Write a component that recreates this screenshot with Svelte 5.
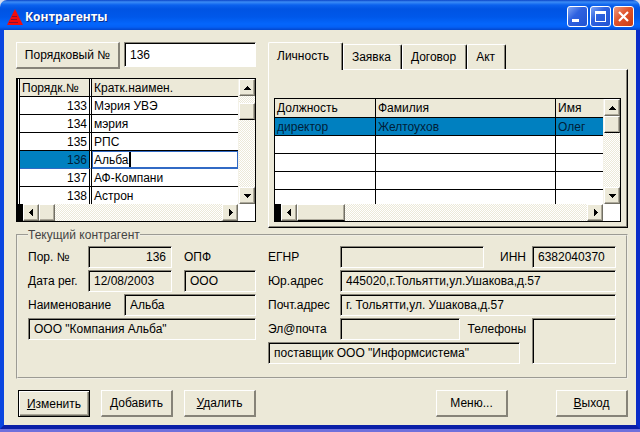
<script>
  const contractors = [
    { id: 133, name: 'Мэрия УВЭ' },
    { id: 134, name: 'мэрия' },
    { id: 135, name: 'РПС' },
    { id: 136, name: 'Альба' },
    { id: 137, name: 'АФ-Компани' },
    { id: 138, name: 'Астрон' }
  ]

  const people = [
    { post: 'директор', surname: 'Желтоухов', name: 'Олег' },
    { post: '', surname: '', name: '' },
    { post: '', surname: '', name: '' },
    { post: '', surname: '', name: '' },
    { post: '', surname: '', name: '' }
  ]

  const tabs = ['Личность', 'Заявка', 'Договор', 'Акт']

  let search = $state('136')
  let selectedId = $state(136)
  let activeTab = $state('Личность')
  let editName = $state('Альба')
</script>

{#snippet arrow(points, label)}
  <button class="scroll-button" type="button" aria-label={label}>
    <svg width="7" height="7" viewBox="0 0 7 7" shape-rendering="crispEdges">
      <polygon {points} />
    </svg>
  </button>
{/snippet}

{#snippet vscroll()}
  <div class="scroll scroll--v">
    {@render arrow('0,6 3.5,2 7,6', 'Вверх')}
    <div class="thumb"></div>
    <div class="track"></div>
    {@render arrow('0,2 7,2 3.5,6', 'Вниз')}
  </div>
{/snippet}

{#snippet hscroll(wide)}
  <div class="scroll scroll--h">
    <div class="split"></div>
    {@render arrow('5,0 5,7 1,3.5', 'Влево')}
    <div class="thumb" class:thumb--wide={wide}></div>
    <div class="track"></div>
    {@render arrow('2,0 6,3.5 2,7', 'Вправо')}
  </div>
{/snippet}

<main class="window">
  <header class="titlebar">
    <svg class="logo" width="16" height="18" viewBox="0 0 16 18">
      <path d="M8 1 L16 17 H0 Z" fill="#f40c0c" />
      <path d="M5 8.5h5M4 11.5h6M2 14.5h9" stroke="#8c1030" stroke-width="1" />
    </svg>
    <h1>Контрагенты</h1>
    <div class="caption-buttons">
      <button class="caption" type="button" aria-label="Свернуть">
        <svg width="19" height="19" viewBox="0 0 19 19"><path d="M4 12h7v3H4z" fill="#fff" /></svg>
      </button>
      <button class="caption" type="button" aria-label="Развернуть">
        <svg width="19" height="19" viewBox="0 0 19 19">
          <path d="M4 4h11v11H4zM5 7v7h9V7z" fill="#fff" fill-rule="evenodd" />
        </svg>
      </button>
      <button class="caption caption--close" type="button" aria-label="Закрыть">
        <svg width="19" height="19" viewBox="0 0 19 19">
          <path d="M5 5l9 9M14 5l-9 9" stroke="#fff" stroke-width="2.2" />
        </svg>
      </button>
    </div>
  </header>

  <div class="client">
    <div class="top">
      <section class="list">
        <div class="search">
          <button class="btn btn--search" type="button">Порядковый №</button>
          <input class="search-input" aria-label="Порядковый №" bind:value={search} />
        </div>

        <div class="grid">
          <table class="contractors">
            <thead>
              <tr><th class="num">Порядк.№</th><th>Кратк.наимен.</th></tr>
            </thead>
            <tbody>
              {#each contractors as row (row.id)}
                <tr class:current={row.id === selectedId} onclick={() => (selectedId = row.id)}>
                  <td class="num">{row.id}</td>
                  {#if row.id === 136}
                    <td class="edit">
                      <div class="edit-box">
                        <input class="cell-input" aria-label="Кратк.наимен." bind:value={editName} /><i class="caret"></i>
                      </div>
                    </td>
                  {:else}
                    <td>{row.name}</td>
                  {/if}
                </tr>
              {/each}
            </tbody>
          </table>
          {@render vscroll()}
          {@render hscroll(false)}
        </div>
      </section>

      <section class="tabs">
        <div class="tab-row" role="tablist">
          {#each tabs as tab}
            <button
              class="tab"
              class:tab--active={tab === activeTab}
              type="button"
              role="tab"
              aria-selected={tab === activeTab}
              onclick={() => (activeTab = tab)}>{tab}</button>
          {/each}
        </div>
        <div class="page" role="tabpanel">
          <div class="grid">
            <table class="people">
              <thead>
                <tr><th class="post">Должность</th><th>Фамилия</th><th class="first">Имя</th></tr>
              </thead>
              <tbody>
                {#each people as person, i}
                  <tr class:selected={i === 0}>
                    <td>{person.post}</td>
                    <td>{person.surname}</td>
                    <td>{person.name}</td>
                  </tr>
                {/each}
              </tbody>
            </table>
            {@render vscroll()}
            {@render hscroll(true)}
          </div>
        </div>
      </section>
    </div>

    <fieldset>
      <legend>Текущий контрагент</legend>
      <div class="details">
        <div class="main-fields">
          <label for="num">Пор. №</label>
          <input id="num" class="f-num right" value="136" readonly />
          <label for="opf" class="l-opf">ОПФ</label>
          <label for="date">Дата рег.</label>
          <input id="date" class="f-num" value="12/08/2003" readonly />
          <input id="opf" class="f-opf" value="ООО" readonly />
          <label for="name" class="l-name">Наименование</label>
          <input id="name" class="f-name" value="Альба" readonly />
          <input class="f-full" aria-label="Полное наименование" value={'ООО "Компания Альба"'} readonly />
        </div>
        <div class="more-fields">
          <label for="egnr">ЕГНР</label>
          <input id="egnr" class="f-egnr" readonly />
          <label for="inn" class="l-inn">ИНН</label>
          <input id="inn" class="f-inn" value="6382040370" readonly />
          <label for="legal">Юр.адрес</label>
          <input id="legal" class="f-address" value="445020,г.Тольятти,ул.Ушакова,д.57" readonly />
          <label for="post">Почт.адрес</label>
          <input id="post" class="f-address" value="г. Тольятти,ул. Ушакова,д.57" readonly />
          <label for="email">Эл@почта</label>
          <input id="email" class="f-email" readonly />
          <label for="phones" class="l-phones">Телефоны</label>
          <textarea id="phones" class="f-phones" readonly></textarea>
          <input class="f-note" aria-label="Примечание" value={'поставщик ООО "Информсистема"'} readonly />
        </div>
      </div>
    </fieldset>

    <div class="actions">
      <button class="btn btn--default" type="button"><u>И</u>зменить</button>
      <button class="btn" type="button"><u>Д</u>обавить</button>
      <button class="btn" type="button"><u>У</u>далить</button>
      <button class="btn btn--menu" type="button">Меню...</button>
      <button class="btn btn--exit" type="button"><u>В</u>ыход</button>
    </div>
  </div>
</main>

<style>
  :global(body) {
    background: #6f70dc;
  }

  .window,
  button,
  input,
  textarea {
    font-family: 'Liberation Sans', Arial, sans-serif;
    font-size: 12px;
    color: #000;
  }

  .window,
  .window * {
    box-sizing: border-box;
  }

  .window {
    --face: #ece9d8;
    --shadow: #868378;
    background: #d5dcf0;
    line-height: 16px;
  }

  button {
    padding: 0;
    margin: 0;
  }

  .titlebar {
    display: flex;
    align-items: center;
    height: 30px;
    padding: 3px 6px 0 7px;
    border-radius: 7px 7px 0 0;
    background: linear-gradient(#0a45c8 0, #3b8cf6 2px, #0b62ee 5px, #0054e3 9px, #0058ea 17px, #0466fc 24px, #0460f6 27px, #0346cc 30px);
  }

  h1 {
    flex: 1;
    margin: 0 0 0 2px;
    font: bold 12px/18px 'Open Sans', 'Noto Sans', sans-serif;
    color: #fff;
    text-shadow: 1px 1px 0 #0a2f8c;
  }

  .caption-buttons {
    display: flex;
    gap: 2px;
  }

  .caption {
    width: 21px;
    height: 21px;
    border: 1px solid #fff;
    border-radius: 3px;
    background: linear-gradient(135deg, #7fa4f4, #2f62e0 40%, #2052d2);
  }

  .caption svg {
    display: block;
  }

  .caption--close {
    background: linear-gradient(135deg, #ee9a80, #e0532c 45%, #c83c14);
  }

  .client {
    padding: 12px 8px 8px 12px;
    border: solid;
    border-width: 0 4px 4px;
    border-color: #0a46e0 #0a2cc8 #0a1fa8 #0a46e0;
    background: var(--face);
  }

  .top {
    display: grid;
    grid-template-columns: minmax(0, 240fr) minmax(0, 360fr);
    gap: 12px;
  }

  .search {
    display: flex;
    gap: 4px;
    margin-bottom: 9px;
  }

  .btn {
    width: 72px;
    height: 27px;
    border: solid;
    border-width: 1px 2px 2px 1px;
    border-color: #fff var(--shadow) var(--shadow) #fff;
    background: var(--face);
  }

  .btn--search {
    width: 104px;
  }

  .search-input {
    flex: 1;
    min-width: 0;
    height: 25px;
    padding: 0 5px;
    border: 1px solid;
    border-color: var(--shadow) #fff #fff var(--shadow);
    box-shadow: inset 1px 1px 0 #000;
    background: #fff;
  }

  .grid {
    display: grid;
    grid-template-columns: minmax(0, 1fr) 17px;
    grid-template-rows: auto 17px;
    border: 1px solid #000;
    background: #fff;
  }

  table {
    width: 100%;
    table-layout: fixed;
    border-spacing: 0;
    border-collapse: separate;
  }

  th,
  td {
    height: 18px;
    padding: 0 2px;
    border-bottom: 1px solid #000;
    line-height: 16px;
    font-weight: normal;
    text-align: left;
    white-space: nowrap;
    overflow: hidden;
    background-clip: padding-box;
  }

  th {
    background-color: var(--face);
  }

  .contractors {
    border-left: 3px double #000;
  }

  .contractors .num {
    width: 72px;
    border-right: 3px double #000;
  }

  .contractors td.num {
    text-align: right;
  }

  .contractors tbody tr:last-child td {
    height: 17px;
    border-bottom: 0;
  }

  .contractors .current .num {
    border-bottom-color: #316ac5;
    background-color: #0080c0;
    color: #002038;
  }

  .contractors .edit {
    padding: 0;
    border-bottom-color: #316ac5;
  }

  .edit-box {
    display: flex;
    align-items: center;
    height: 17px;
    padding-left: 1px;
    border: 1px solid #316ac5;
  }

  .cell-input {
    field-sizing: content;
    height: 15px;
    padding: 0;
    border: 0;
    outline: 0;
    background: none;
  }

  .caret {
    width: 2px;
    height: 15px;
    background: #000;
  }

  .people th {
    height: 19px;
  }

  .people .post {
    width: 101px;
  }

  .people .first {
    width: 47px;
  }

  .people th:not(:last-child),
  .people td:not(:last-child) {
    border-right: 1px solid #000;
  }

  .people tbody tr:last-child td {
    height: 14px;
    border-bottom: 0;
  }

  .selected td {
    background-color: #0080c0;
    color: #002038;
  }

  .scroll {
    display: flex;
    background: repeating-conic-gradient(#fff 0 25%, #ece9d8 0 50%) 0 0 / 2px 2px;
  }

  .scroll--v {
    flex-direction: column;
    border-left: 1px solid #f4f2e8;
  }

  .track {
    flex: 1;
  }

  .scroll-button,
  .thumb {
    display: flex;
    align-items: center;
    justify-content: center;
    flex: none;
    width: 16px;
    height: 17px;
    border: 1px solid;
    border-color: #fff #716f64 #716f64 #fff;
    box-shadow: inset -1px -1px 0 #aca899;
    background: var(--face);
  }

  .scroll--v .thumb {
    margin-top: 7px;
    border-bottom-color: #000;
  }

  .people + .scroll--v .thumb {
    margin-top: 0;
  }

  .scroll--h .thumb--wide {
    width: 48px;
    border-bottom-color: #000;
  }

  .split {
    width: 6px;
    background: #000;
  }

  .tabs {
    display: flex;
    flex-direction: column;
  }

  .tab-row {
    display: flex;
    align-items: flex-end;
    height: 27px;
  }

  .tab {
    height: 25px;
    padding: 0 9px 0 8px;
    border: solid;
    border-width: 1px 1px 0 1px;
    border-color: #fff #000 #fff #fff;
    border-radius: 2px 2px 0 0;
    box-shadow: inset -1px 0 0 var(--shadow);
    background: var(--face);
  }

  .tab:not(.tab--active) {
    padding-right: 10px;
  }

  .tab--active {
    position: relative;
    height: 28px;
    margin-bottom: -1px;
    padding: 0 13px 2px 8px;
  }

  .page {
    flex: 1;
    padding: 28px 6px 5px 5px;
    border: 1px solid;
    border-color: #fff #000 #000 #fff;
    box-shadow: inset -1px -1px 0 var(--shadow);
  }

  fieldset {
    min-width: 0;
    margin: 0;
    padding: 4px 10px 11px;
    border: 2px groove #f0eee4;
  }

  legend {
    padding: 0;
    line-height: 14px;
    color: #444;
  }

  .details {
    display: grid;
    grid-template-columns: minmax(0, 228fr) minmax(0, 348fr);
    gap: 12px;
  }

  .main-fields,
  .more-fields {
    display: grid;
    grid-auto-rows: 24px;
    align-content: start;
  }

  .main-fields {
    grid-template-columns: 60px 36px 48px 12px minmax(0, 1fr);
  }

  .more-fields {
    grid-template-columns: 72px minmax(0, 1fr) 24px 36px 12px 84px;
  }

  fieldset input,
  textarea {
    width: 100%;
    min-width: 0;
    height: 22px;
    padding: 0 5px;
    border: 1px solid;
    border-color: var(--shadow) #fff #fff var(--shadow);
    box-shadow: inset 1px 1px 0 #000;
    outline: 0;
    background: var(--face);
  }

  label {
    padding-top: 3px;
    white-space: nowrap;
  }

  .right {
    text-align: right;
  }

  .f-num {
    grid-column: 2 / 4;
  }

  .l-opf,
  .f-opf {
    grid-column: 5;
  }

  .l-name {
    grid-column: 1 / 3;
  }

  .f-name {
    grid-column: 3 / 6;
  }

  .f-full {
    grid-column: 1 / 6;
  }

  .f-egnr {
    grid-column: 2 / 4;
  }

  .l-inn {
    grid-column: 4 / 6;
    justify-self: end;
    padding-right: 6px;
  }

  .f-address {
    grid-column: 2 / 7;
  }

  .f-email {
    grid-column: 2;
  }

  .l-phones {
    grid-column: 3 / 6;
    justify-self: end;
    padding-right: 6px;
  }

  .f-phones {
    grid-column: 6;
    grid-row: 4 / 6;
    height: 46px;
    resize: none;
  }

  .f-note {
    grid-column: 1 / 5;
    grid-row: 5;
  }

  .actions {
    display: flex;
    gap: 11px;
    margin-top: 11px;
    padding-left: 2px;
  }

  .btn--default {
    border-width: 1px;
    border-color: #000;
    box-shadow: inset 1px 1px 0 #fff, inset -1px -1px 0 #716f64, inset -2px -2px 0 #aca899;
  }

  .btn--menu {
    margin-left: auto;
  }

  .btn--exit {
    margin-left: 37px;
  }
</style>
